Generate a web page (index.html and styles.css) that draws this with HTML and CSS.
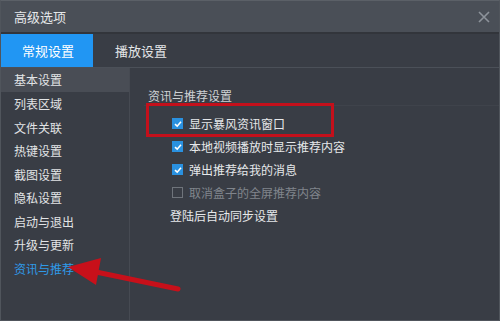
FILE: index.html
```html
<!DOCTYPE html>
<html>
<head>
<meta charset="utf-8">
<link rel="stylesheet" href="styles.css">
</head>
<body>
<div class="window">
  <div class="titlebar">
    <span class="title">高级选项</span>
    <svg class="close" width="12" height="12" viewBox="0 0 12 12"><path d="M1 1L11 11M11 1L1 11" stroke="#8d939b" stroke-width="1.6"/></svg>
  </div>
  <div class="tabs">
    <div class="tab active">常规设置</div>
    <div class="tab">播放设置</div>
  </div>
  <div class="main">
    <div class="sidebar">
      <div class="item sel">基本设置</div>
      <div class="item">列表区域</div>
      <div class="item">文件关联</div>
      <div class="item">热键设置</div>
      <div class="item">截图设置</div>
      <div class="item">隐私设置</div>
      <div class="item">启动与退出</div>
      <div class="item">升级与更新</div>
      <div class="item current">资讯与推荐</div>
    </div>
    <div class="content">
      <div class="heading">资讯与推荐设置</div>
      <div class="rows">
        <div class="row"><span class="cb on"><svg width="10" height="10" viewBox="0 0 10 10"><path d="M2 5.2L4.2 7.2L8 2.8" stroke="#fff" stroke-width="1.6" fill="none"/></svg></span>显示暴风资讯窗口</div>
        <div class="row"><span class="cb on"><svg width="10" height="10" viewBox="0 0 10 10"><path d="M2 5.2L4.2 7.2L8 2.8" stroke="#fff" stroke-width="1.6" fill="none"/></svg></span>本地视频播放时显示推荐内容</div>
        <div class="row"><span class="cb on"><svg width="10" height="10" viewBox="0 0 10 10"><path d="M2 5.2L4.2 7.2L8 2.8" stroke="#fff" stroke-width="1.6" fill="none"/></svg></span>弹出推荐给我的消息</div>
        <div class="row dis"><span class="cb off"></span>取消盒子的全屏推荐内容</div>
        <div class="row plain">登陆后自动同步设置</div>
      </div>
    </div>
  </div>
  <div class="redbox"></div>
  <svg class="arrow" width="500" height="321" viewBox="0 0 500 321">
    <path d="M178 289L96 272" stroke="#c8101a" stroke-width="5" stroke-linecap="round"/>
    <polygon points="68,267 101,258 96,285" fill="#c8101a"/>
  </svg>
</div>
</body>
</html>
```
FILE: styles.css
```css
* { box-sizing: border-box; }
html, body { margin: 0; padding: 0; }
body {
  width: 500px;
  height: 321px;
  overflow: hidden;
  background: #393d45;
  font-family: "Noto Sans CJK SC", "Noto Sans", sans-serif;
  font-size: 12px;
}
.window {
  position: relative;
  width: 500px;
  height: 321px;
  border: 1px solid #50555c;
  border-top: 1px solid #5b6067;
  display: flex;
  flex-direction: column;
  background: #393d45;
}
.titlebar {
  height: 33px;
  background: #4a4f57;
  display: flex;
  align-items: center;
  justify-content: space-between;
  padding: 0 9px 0 13px;
  border-bottom: 2px solid #32353b;
}
.title { color: #e6e8ea; font-size: 13px; }
.close { display: block; }
.tabs {
  height: 34px;
  display: flex;
  background: #393d45;
  border-bottom: 1px solid #4b5058;
}
.tab {
  width: 92px;
  display: flex;
  align-items: center;
  justify-content: center;
  color: #e4e6e8;
  font-size: 13px;
  padding-left: 2px;
}
.tab + .tab { width: 96px; padding-left: 0; }
.tab.active { background: #2196f3; color: #fff; }
.main { flex: 1; display: flex; }
.sidebar {
  width: 129px;
  border-right: 1px solid #464a52;
  display: flex;
  flex-direction: column;
}
.item {
  height: 23.5px;
  line-height: 23.5px;
  padding-left: 13px;
  color: #e2e4e6;
}
.item.sel { background: #494d55; height: 24px; }
.item.current { color: #2f9ae8; }
.content { flex: 1; padding: 18px 0 0 18px; }
.heading {
  color: #cfd2d5;
  height: 20px;
  line-height: 20px;
  border-bottom: 1px solid #3f434b;
  margin-left: -4px;
  padding-left: 4px;
}
.rows { padding-top: 6px; }
.row {
  height: 23px;
  display: flex;
  align-items: center;
  padding-left: 24px;
  color: #e6e8ea;
}
.row.dis { color: #80858c; }
.row.plain { padding-left: 22px; }
.cb {
  width: 11px;
  height: 11px;
  margin-right: 6px;
  display: inline-flex;
  align-items: center;
  justify-content: center;
}
.cb.on { background: #2a91e0; }
.cb.off { border: 1px solid #6f747b; }
.redbox {
  position: absolute;
  left: 145px;
  top: 102px;
  width: 188px;
  height: 34px;
  border: 3px solid #c4101b;
}
.arrow { position: absolute; left: -1px; top: -1px; pointer-events: none; }
```
